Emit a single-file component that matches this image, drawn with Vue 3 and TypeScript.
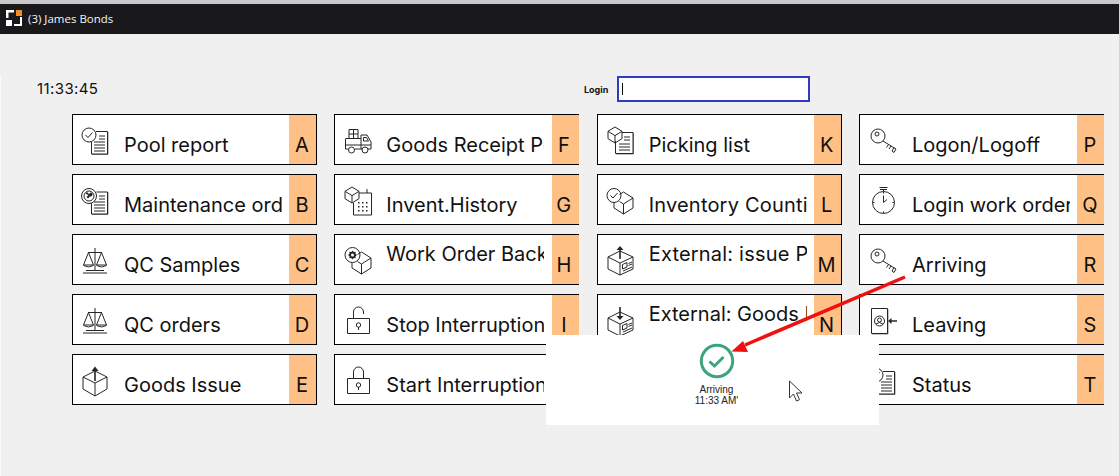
<script setup lang="ts">
interface Icon { s: string; g?: string; f?: string }
interface Item { label: string; key: string; icon: Icon; tall?: boolean; wide?: boolean }

const circle = (x: number, y: number, r: number): string =>
  `M${x - r} ${y}a${r} ${r} 0 1 0 ${2 * r} 0a${r} ${r} 0 1 0 ${-2 * r} 0`
const gear = (cx: number, cy: number, r1: number, r2: number, n: number): string => {
  const pts: string[] = []
  for (let i = 0; i < n * 2; i++) {
    const a = (Math.PI * i) / n
    const r = i % 2 ? r1 : r2
    pts.push(`${(cx + r * Math.cos(a)).toFixed(2)} ${(cy + r * Math.sin(a)).toFixed(2)}`)
  }
  return `M${pts.join('L')}Z${circle(cx, cy, 1.5)}`
}
const docLines = 'M19 11h6M19 14h6M14 17h11M14 20h11M14 23h11M14 26h11'
const docEdge = 'M28 7v22.5h-16'
const cube = (x: number, y: number, w: number, h: number): string => {
  const m = x + w / 2, r = x + w, a = h * 0.27, b = h * 0.54, c = h * 0.73
  return `M${x} ${y + a}L${m} ${y}L${r} ${y + a}L${m} ${y + b}ZM${x} ${y + a}V${y + c}L${m} ${y + h}L${r} ${y + c}V${y + a}M${m} ${y + b}V${y + h}`
}
const key = `${circle(11, 11, 7)}${circle(10, 9, 2)}M16 16L29 24M21.5 19.5l-2 3M24 21l-2 3M27 22.5l-2 3.5l2 1.5l2-3.5`
const scale = 'M15 3V26M8 7.5H22M8.5 7.5L3.5 20M8.5 7.5L13.5 20M21.5 7.5L16.5 20M21.5 7.5L26.5 20M3.5 20H13.5M3.5 20.5q5 3 10 0M16.5 20H26.5M16.5 20.5q5 3 10 0M6 25.5H24M3 28H27'
const lockBody = 'M5.5 13.5H27.5V28.5H5.5Z'
const keyhole = `${circle(16.5, 20, 2.2)}M16.5 22V25`
const pool: Icon = {
  s: `${circle(9, 10, 7)}M5.5 10l2.5 2.5l4.5-5M16 6.5h11.5v22.5h-16v-12${docLines}`,
  g: docEdge,
}

const rows: Item[] = [
  { label: 'Pool report', key: 'A', icon: pool },
  { label: 'Maintenance order', key: 'B', icon: {
    s: `${circle(9, 11, 7.5)}${circle(9, 11, 5)}M16.5 7h11v22h-16v-11${docLines}`,
    g: docEdge,
    f: 'M5.5 8.5L7 7L9 9L11 7.2L12.5 8.5C12.8 10.5 11.5 11.8 10 11.5L8 13.5L6.5 12L8.5 10C7.8 9.5 6.5 9.5 5.5 8.5Z',
  } },
  { label: 'QC Samples', key: 'C', icon: { s: scale } },
  { label: 'QC orders', key: 'D', icon: { s: scale } },
  { label: 'Goods Issue', key: 'E', icon: {
    s: 'M3 12L15 6L27 12L15 18ZM3 12V24L15 31L27 24V12M15 18V31',
    f: 'M14.2 16V6H11.5L15 1.5L18.5 6H15.8V16Z',
  } },

  { label: 'Goods Receipt Posting', key: 'F', icon: {
    s: `M7 4.5H16V13.5H7ZM7 9H16M11.5 4.5V13.5M4 13.5H19M19 10H25L29 17V24H26M3.5 13.5V24H6.5M13 24H20M19 10V24M21.5 12.5H24.5L26.5 16H21.5Z${circle(9.5, 25, 3)}${circle(23, 25, 3)}M3.5 20H29`,
  } },
  { label: 'Invent.History', key: 'G', icon: {
    s: `${cube(3, 2, 14, 16)}M17 8H29.5V30H11.5V18M25 4V8`,
    f: 'M16 17h1.5v1.5h-1.5zM20 17h1.5v1.5h-1.5zM24 17h1.5v1.5h-1.5zM16 21h1.5v1.5h-1.5zM20 21h1.5v1.5h-1.5zM24 21h1.5v1.5h-1.5zM16 25h1.5v1.5h-1.5zM20 25h1.5v1.5h-1.5zM24 25h1.5v1.5h-1.5z',
  } },
  { label: 'Work Order Backflush', key: 'H', tall: true, icon: {
    s: `${circle(10.5, 10, 7.5)}M15.5 9.5L19.5 7L29 13L19.5 19L15.5 16.5M10 17.5V23L19.5 29L29 23V13M19.5 19V29`,
    f: gear(10.5, 10, 3.2, 4.5, 8),
  } },
  { label: 'Stop Interruption', key: 'I', icon: { s: `${lockBody}M11.5 13V7a5 5 0 0 1 10 0V9${keyhole}` } },
  { label: 'Start Interruption', key: 'J', icon: { s: `${lockBody}M11.5 13V7a5 5 0 0 1 10 0V13${keyhole}` } },

  { label: 'Picking list', key: 'K', icon: {
    s: `${cube(3, 2, 14, 16)}M17 7.5H28V28.5H10.5V16M19 12H25M19 15H25M14 19H25M14 22H25M14 25H25`,
    g: 'M28.5 8V29H11',
  } },
  { label: 'Inventory Counting', key: 'L', wide: true, icon: {
    s: `${circle(9, 10.5, 7)}M5.5 10.5l2.5 2.5l4.5-5M14.5 9.5L18.5 7L28 13L18.5 19L14.5 16.5M9 17.5V23L18.5 29L28 23V13M18.5 19V29`,
  } },
  { label: 'External: issue Posting', key: 'M', tall: true, wide: true, icon: {
    s: 'M3 12L15 6L28 12L15 18ZM3 12V24L15 30L28 24V12M15 18V30M17.5 19.5L22 17.5V22L17.5 24ZM23.5 18.5L27 17M23.5 20.5L27 19M18 26L27 22',
    f: 'M14.2 14V5H11.5L15 1L18.5 5H15.8V14Z',
  } },
  { label: 'External: Goods Receipt', key: 'N', tall: true, icon: {
    s: 'M3 13L15 7L28 13L15 19ZM3 13V25L15 31L28 25V13M15 19V31M17.5 20.5L22 18.5V23L17.5 25ZM23.5 19.5L27 18M23.5 21.5L27 20M18 27L27 23',
    f: 'M14.2 2H15.8V11H18.5L15 15L11.5 11H14.2Z',
  } },
  { label: '', key: 'O', icon: { s: '' } },

  { label: 'Logon/Logoff', key: 'P', icon: { s: key } },
  { label: 'Login work order', key: 'Q', icon: {
    s: `${circle(16.5, 17.5, 11)}M12.5 2.5H20.5M13 4.5H20M16.5 4.5V6.5M16.5 17.5V10.5M16.5 17.5L20 14.5M16.5 7V8.5M16.5 26.5V28M6 17.5H7.5M25.5 17.5H27`,
  } },
  { label: 'Arriving', key: 'R', icon: { s: key } },
  { label: 'Leaving', key: 'S', icon: {
    s: `M4.5 3.5H20.5V28.5H4.5Z${circle(12.5, 16, 5)}${circle(12.5, 15, 2)}M9 19q3.5-3 7 0`,
    f: 'M30 15.3V16.7H24.5V19L21 16L24.5 13V15.3Z',
    g: 'M21 4V29H5',
  } },
  { label: 'Status', key: 'T', icon: pool },
]
</script>

<template>
  <div class="window">
    <div class="strip"></div>
    <header class="titlebar">
      <svg class="logo" width="16" height="16" viewBox="0 0 16 16">
        <path d="M0 0H8V2.5H2.5V8H0Z" fill="#fff" />
        <rect x="10" y="0" width="6" height="6" fill="#f58a1f" />
        <rect x="0" y="10" width="6" height="6" fill="#fff" />
        <path d="M16 7V16H8V14H14V7Z" fill="#fff" />
      </svg>
      <span class="title">(3) James Bonds</span>
    </header>
    <main class="content">
      <div class="top">
        <span class="clock">11:33:45</span>
        <label class="login">
          <span class="login-label">Login</span>
          <span class="input"><i class="caret"></i></span>
        </label>
      </div>
      <div class="grid">
        <div
          v-for="(item, i) in rows"
          :key="item.key"
          class="card"
          :class="{ open: Math.floor(i / 5) % 2 === 1 }"
        >
          <svg class="icon" width="36" height="36" viewBox="0 0 36 36">
            <path v-if="item.icon.g" :d="item.icon.g" fill="none" stroke="#8a8a8a" stroke-width="1" />
            <path :d="item.icon.s" fill="none" stroke="#262626" stroke-width="1" />
            <path v-if="item.icon.f" :d="item.icon.f" fill="#262626" fill-rule="evenodd" />
          </svg>
          <span class="label" :class="{ tall: item.tall, wide: item.wide }">{{ item.label }}</span>
          <span class="key">{{ item.key }}</span>
        </div>
      </div>
    </main>

    <div class="toast">
      <svg width="36" height="36" viewBox="0 0 36 36">
        <circle cx="18" cy="18" r="15.7" fill="none" stroke="#3aa57a" stroke-width="3" />
        <path d="M10.5 18.5L15.5 23L24.5 14" fill="none" stroke="#3aa57a" stroke-width="3" />
      </svg>
      <span class="toast-text">Arriving<br />11:33 AM'</span>
    </div>

    <svg class="annotation" width="1119" height="476" viewBox="0 0 1119 476">
      <path d="M905 277L745 345" stroke="#f01010" stroke-width="3.5" fill="none" />
      <path d="M731.5 351.5L743 341L748 352Z" fill="#f01010" />
      <path d="M789.5 381V398L793.5 394L796.5 401L799.5 399.7L796.5 393H802Z" fill="#fff" stroke="#333" stroke-width="1" />
    </svg>
  </div>
</template>

<style>
html, body { margin: 0; background: #f0f0f0; }
</style>

<style scoped>
.window {
  position: relative;
  width: 1119px;
  height: 476px;
  overflow: hidden;
  background: #f0f0f0;
  font-family: Inter, "Liberation Sans", sans-serif;
  color: #111;
}
.strip { height: 4px; background: #c9c9c9; }
.titlebar {
  box-sizing: border-box;
  height: 30px;
  background: #19191b;
  display: flex;
  align-items: center;
  padding: 0 0 2px 6px;
  gap: 6px;
}
.logo { flex: none; }
.title {
  font-family: "Open Sans", "Liberation Sans", sans-serif;
  font-size: 11.5px;
  color: #f4f4f4;
}
.content { border-left: 1px solid #fbfbfb; height: 442px; box-sizing: border-box; }
.top {
  display: flex;
  align-items: center;
  height: 26px;
  margin-top: 42px;
  padding-left: 36px;
}
.clock { font-size: 15px; width: 547px; letter-spacing: 0.4px; margin-top: -2px; }
.login { display: flex; align-items: center; gap: 10px; }
.login-label { font-size: 9px; font-weight: 700; width: 23px; }
.input {
  display: flex;
  align-items: center;
  box-sizing: border-box;
  width: 193px;
  height: 26px;
  background: #fff;
  border: 2px solid #2f3bc4;
  padding-left: 3px;
}
.caret { width: 1px; height: 12px; background: #000; }
.grid {
  display: grid;
  grid-auto-flow: column;
  grid-template-rows: repeat(5, 51px);
  grid-template-columns: repeat(4, 245px);
  column-gap: 17.33px;
  row-gap: 9px;
  margin-top: 12px;
  padding-left: 71px;
}
.card {
  box-sizing: border-box;
  display: flex;
  background: #fff;
  border: 1px solid #000;
  overflow: hidden;
}
.card.open { border-right: 0; }
.icon { flex: none; margin: 10px 0 0 7px; }
.label {
  flex: 1;
  min-width: 0;
  margin: 0 7px 0 8px;
  padding-top: 18px;
  font-size: 20px;
  line-height: 24px;
  white-space: nowrap;
  overflow: hidden;
}
.card.open .label { margin-right: 8px; }
.card:nth-child(n+16) .label { margin-left: 9px; margin-right: 7px; }
.label.tall { padding-top: 7px; }
.label.wide { letter-spacing: 0.2px; }
.key {
  flex: none;
  width: 27px;
  box-sizing: border-box;
  background: #ffc086;
  padding: 18px 1px 0 0;
  font-size: 20px;
  line-height: 24px;
  text-align: center;
}
.card:nth-child(n+6):nth-child(-n+10) .key { padding-right: 4px; }
.toast {
  position: absolute;
  left: 546px;
  top: 335px;
  width: 333px;
  height: 90px;
  background: #fff;
  display: flex;
  flex-direction: column;
  align-items: center;
  padding: 8px 0 0 8px;
  box-sizing: border-box;
}
.toast-text {
  margin-top: 5px;
  font-family: "Liberation Sans", Arial, sans-serif;
  font-size: 10px;
  line-height: 11px;
  text-align: center;
  color: #222;
}
.annotation { position: absolute; left: 0; top: 0; pointer-events: none; }
</style>
